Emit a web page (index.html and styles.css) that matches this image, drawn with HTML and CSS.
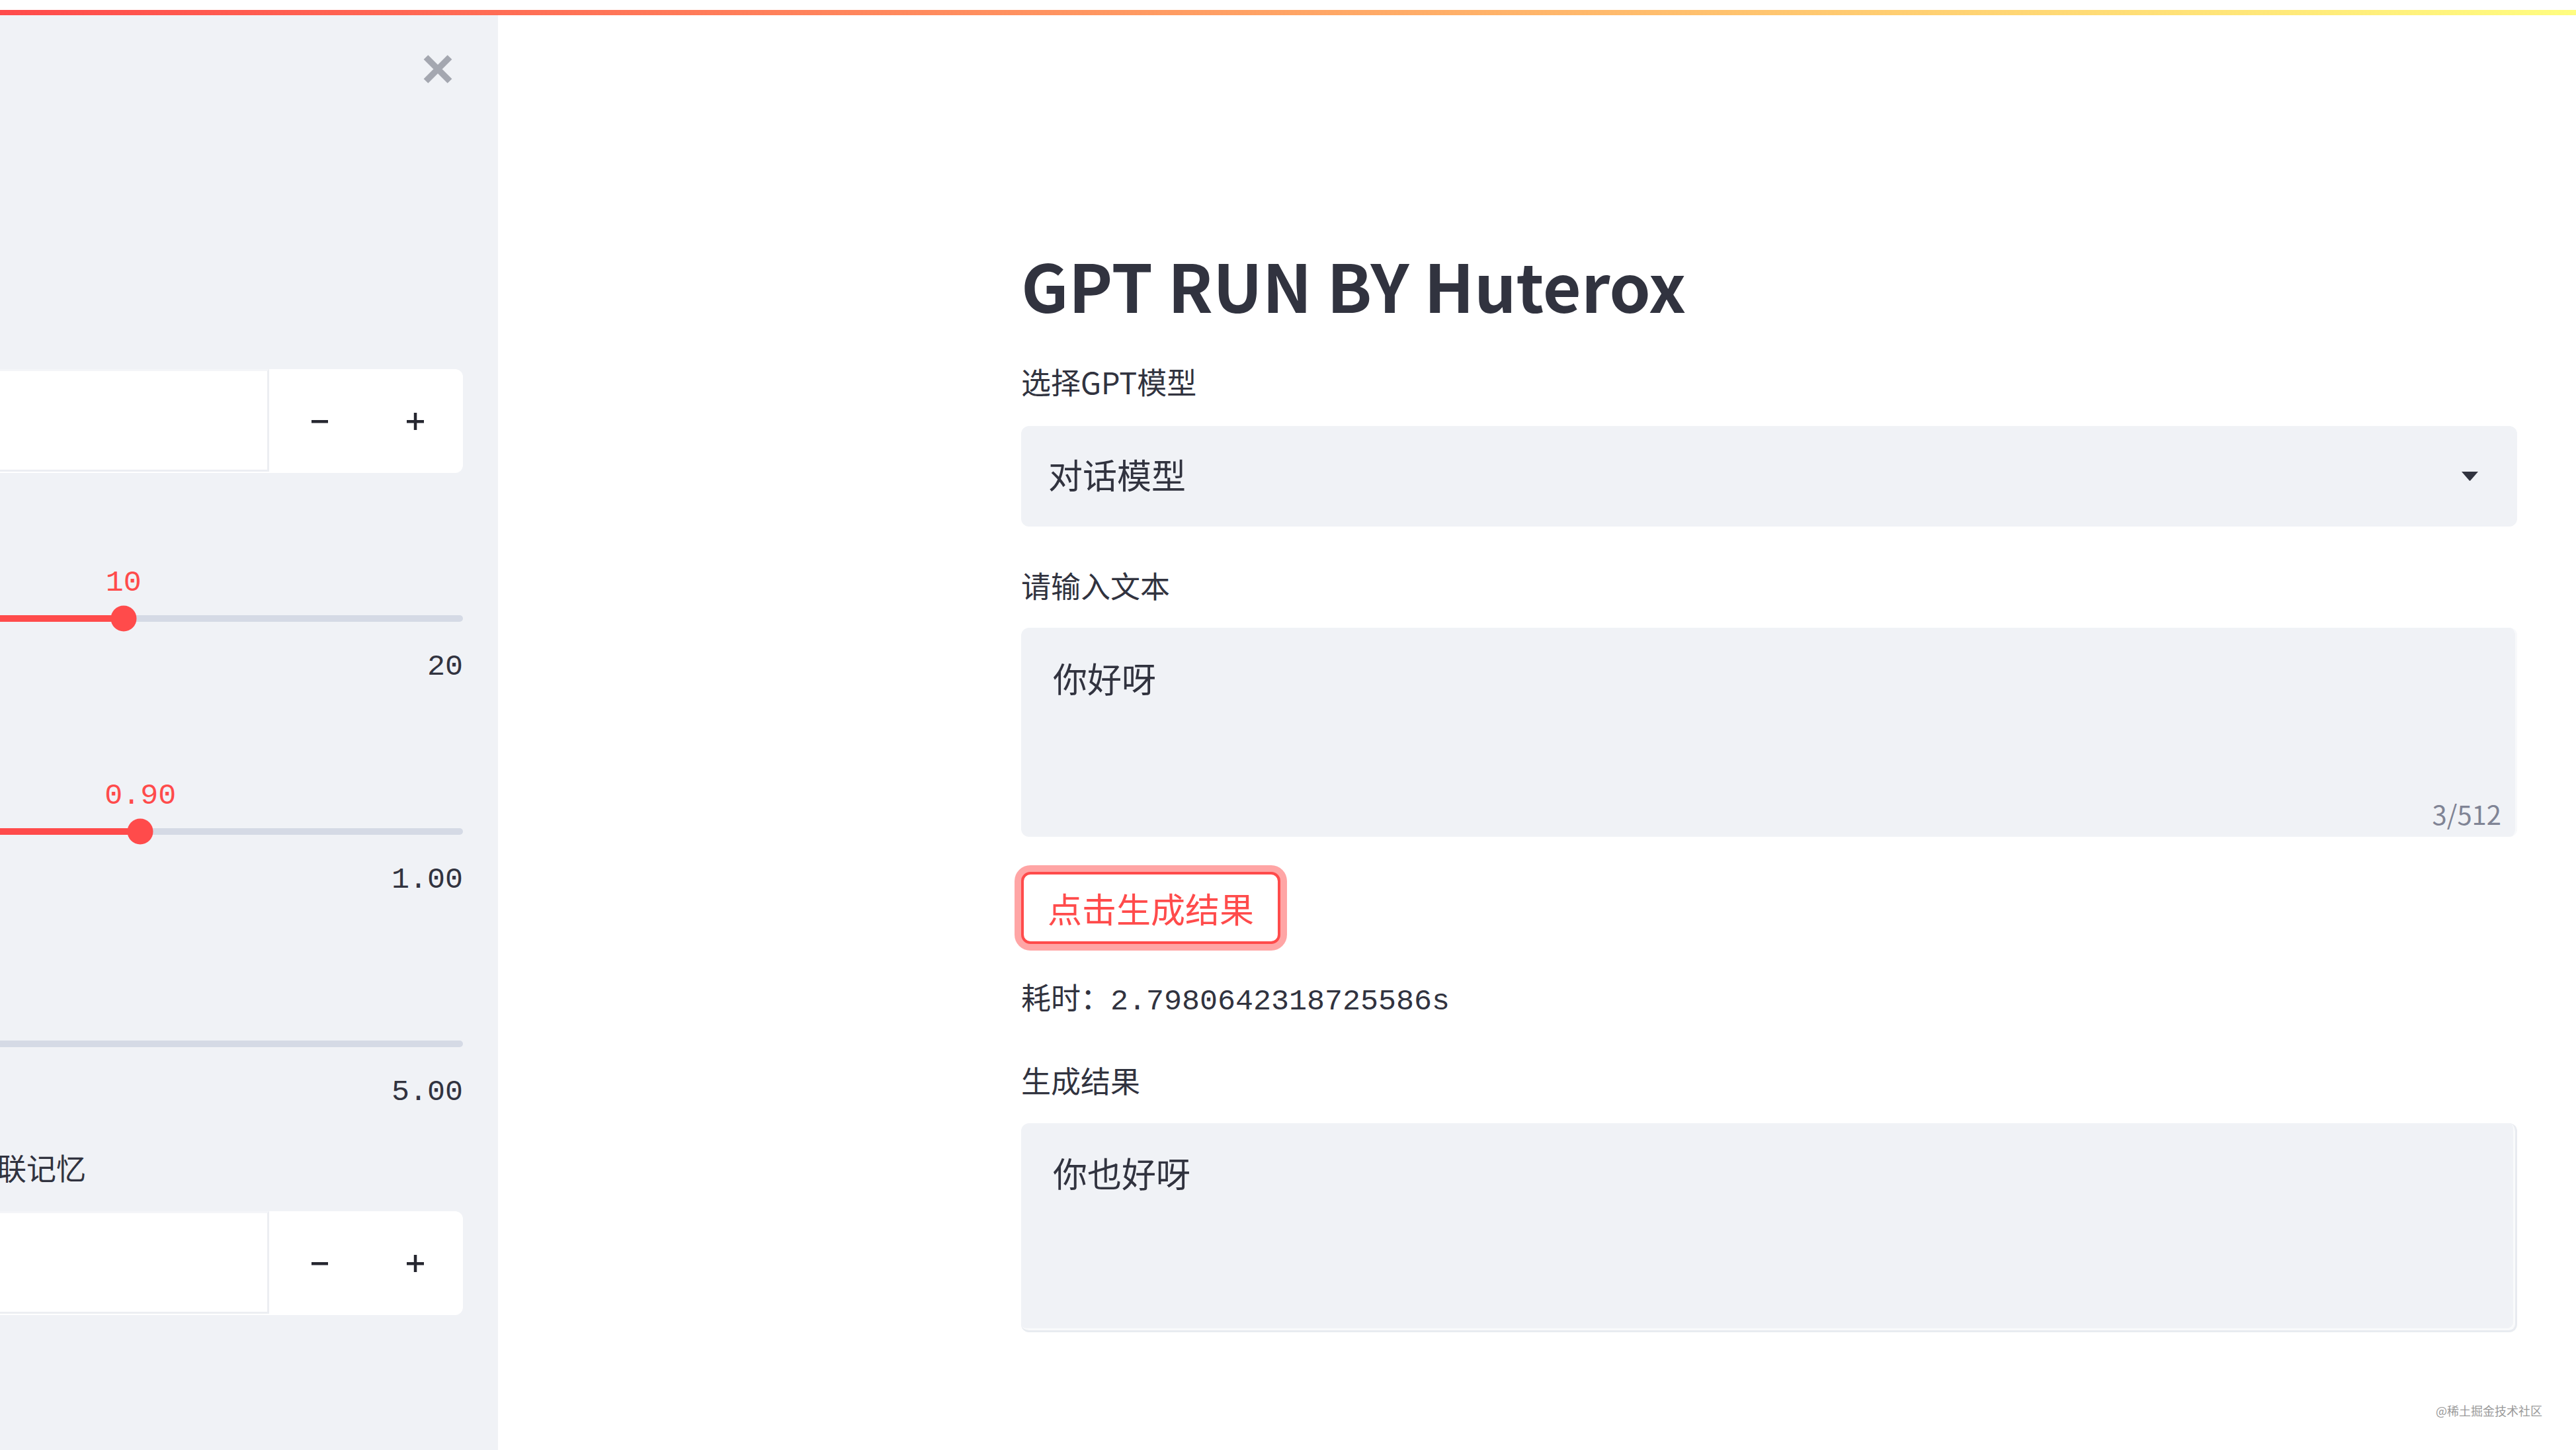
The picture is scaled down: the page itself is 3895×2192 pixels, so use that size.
FILE: index.html
```html
<!DOCTYPE html>
<html lang="zh-CN">
<head>
    <meta charset="UTF-8">
    <meta name="viewport" content="width=device-width, initial-scale=1.0">
    <title>GPT RUN BY Huterox</title>
    <link rel="stylesheet" href="styles.css">
</head>
<body>

    <div class="top-gap"></div>
    <div class="decoration"></div>

    <div class="app">
        <aside class="sidebar">
            <div class="sb-content">
                <div class="sb-close">
                    <svg viewBox="0 0 44 45" width="44" height="45">
                        <path d="M4 4.5L40 40.5M40 4.5L4 40.5" stroke="#a4a7b0" stroke-width="9.5" fill="none"/>
                    </svg>
                </div>

                <div class="num-input num-top">
                    <div class="num-field"></div>
                    <div class="num-btns">
                        <div class="step">
                            <svg viewBox="0 0 26 26" width="26" height="26"><path d="M0 11h25v4.5H0z" fill="#262730"/></svg>
                        </div>
                        <div class="step">
                            <svg viewBox="0 0 26 26" width="26" height="26"><path d="M0 11h26v4.5H0zM10.8 0h4.5v26h-4.5z" fill="#262730"/></svg>
                        </div>
                    </div>
                </div>

                <div class="slider slider-1">
                    <div class="slider-value-row"><span class="slider-value" style="left: 42%">10</span></div>
                    <div class="slider-track">
                        <div class="slider-rail"><div class="slider-fill" style="width: 42%"></div></div>
                        <div class="slider-thumb" style="left: 42%"></div>
                    </div>
                    <div class="slider-max">20</div>
                </div>

                <div class="slider slider-2">
                    <div class="slider-value-row"><span class="slider-value" style="left: 44.9%">0.90</span></div>
                    <div class="slider-track">
                        <div class="slider-rail"><div class="slider-fill" style="width: 44.9%"></div></div>
                        <div class="slider-thumb" style="left: 44.9%"></div>
                    </div>
                    <div class="slider-max">1.00</div>
                </div>

                <div class="slider slider-3">
                    <div class="slider-value-row"></div>
                    <div class="slider-track">
                        <div class="slider-rail"><div class="slider-fill" style="width: 0%"></div></div>
                        <div class="slider-thumb" style="left: 0%"></div>
                    </div>
                    <div class="slider-max">5.00</div>
                </div>

                <div class="sb-label">上下文关联记忆</div>

                <div class="num-input num-bottom">
                    <div class="num-field"></div>
                    <div class="num-btns">
                        <div class="step">
                            <svg viewBox="0 0 26 26" width="26" height="26"><path d="M0 11h25v4.5H0z" fill="#262730"/></svg>
                        </div>
                        <div class="step">
                            <svg viewBox="0 0 26 26" width="26" height="26"><path d="M0 11h26v4.5H0zM10.8 0h4.5v26h-4.5z" fill="#262730"/></svg>
                        </div>
                    </div>
                </div>
            </div>
        </aside>

        <main class="main">
            <div class="block">
                <h1 class="title">GPT RUN BY Huterox</h1>

                <div class="label label-model">选择GPT模型</div>
                <div class="select">
                    <span class="select-value">对话模型</span>
                    <svg class="select-arrow" viewBox="0 0 25 15" width="25" height="15">
                        <path d="M0 1h25L13.5 14.2q-1 1-2 0z" fill="#31333f"/>
                    </svg>
                </div>

                <div class="label label-input">请输入文本</div>
                <div class="textbox textbox-input">
                    <div class="textbox-text">你好呀</div>
                    <span class="counter">3/512</span>
                </div>

                <button class="run-btn">点击生成结果</button>

                <div class="elapsed">耗时：2.7980642318725586s</div>

                <div class="label label-result">生成结果</div>
                <div class="textbox textbox-result">
                    <div class="textbox-text">你也好呀</div>
                </div>
            </div>
        </main>
    </div>

    <div class="watermark">@稀土掘金技术社区</div>

</body>
</html>
```

FILE: styles.css
```css
* {
    box-sizing: border-box;
}

html, body {
    margin: 0;
    height: 100%;
}

body {
    position: relative;
    display: flex;
    flex-direction: column;
    height: 2192px;
    overflow: hidden;
    background: #fff;
    color: #31333f;
    font-family: "Noto Sans CJK SC", "Noto Sans", sans-serif;
}

.top-gap {
    height: 15px;
    flex: none;
}

.decoration {
    height: 8px;
    flex: none;
    background: linear-gradient(90deg, #ff4b4b, #fffd80);
}

.app {
    flex: 1;
    display: flex;
    min-height: 0;
}

/* 侧边栏 (左侧被截掉一部分) */
.sidebar {
    width: 753px;
    flex: none;
    background: #f0f2f6;
    padding-right: 53px;
    overflow: hidden;
}

.sb-content {
    width: 885px;
    margin-left: -185px;
    padding-top: 59px;
}

.sb-close {
    display: flex;
    justify-content: flex-end;
    padding-right: 16px;
    height: 45px;
}

.num-input {
    display: flex;
    height: 157px;
    background: #fff;
    border-radius: 0 12px 12px 0;
}

.num-top {
    margin-top: 431px;
}

.num-bottom {
    margin-top: 30px;
}

.num-field {
    flex: 1;
    margin-right: 5px;
    border-top: 3px solid #f4f5f8;
    border-right: 3px solid #eceef2;
    border-bottom: 3px solid #eceef2;
    margin-bottom: 2px;
}

.num-btns {
    display: flex;
    width: 288px;
}

.step {
    flex: 1;
    display: flex;
    align-items: center;
    justify-content: center;
}

/* 滑块 */
.slider-1 {
    margin-top: 135px;
}

.slider-2 {
    margin-top: 132px;
}

.slider-3 {
    margin-top: 131px;
}

.slider-value-row {
    position: relative;
    height: 63px;
}

.slider-value,
.slider-max {
    font-family: "Liberation Mono", "DejaVu Sans Mono", monospace;
    font-size: 45px;
    line-height: 63px;
}

.slider-value {
    position: absolute;
    top: 0;
    transform: translateX(-50%);
    color: #ff4b4b;
}

.slider-track {
    position: relative;
    height: 40px;
    margin-top: 2px;
    padding-top: 15px;
}

.slider-rail {
    height: 10px;
    border-radius: 5px;
    background: #d5dae5;
    overflow: hidden;
}

.slider-fill {
    height: 100%;
    background: #ff4b4b;
}

.slider-thumb {
    position: absolute;
    top: 50%;
    width: 39px;
    height: 39px;
    border-radius: 50%;
    background: #ff4b4b;
    transform: translate(-50%, -50%);
}

.slider-max {
    margin-top: 22px;
    height: 63px;
    text-align: right;
    color: #31333f;
}

.sb-label {
    margin-top: 46px;
    font-size: 45px;
    line-height: 72px;
    white-space: nowrap;
}

/* 主区域 */
.main {
    flex: 1;
    display: flex;
    justify-content: flex-end;
    padding-right: 89px;
}

.block {
    width: 2262px;
    padding-top: 337px;
}

.title {
    margin: 0;
    font-size: 100px;
    line-height: 140px;
    font-weight: 700;
    color: #31333f;
}

.label {
    font-size: 45px;
    line-height: 72px;
}

.label-model {
    margin-top: 41px;
}

.select {
    display: flex;
    align-items: center;
    height: 152px;
    margin-top: 31px;
    padding-left: 41px;
    padding-bottom: 8px;
    background: #f0f2f6;
    border-radius: 12px;
    font-size: 52px;
}

.select-arrow {
    margin-left: auto;
    margin-right: 59px;
    margin-bottom: -6px;
}

.label-input {
    margin-top: 53px;
}

.textbox {
    position: relative;
    height: 316px;
    padding: 34px 48px 0;
    background: #f0f2f6;
    border-radius: 12px;
    font-size: 52px;
    line-height: 83px;
}

.textbox-input {
    margin-top: 28px;
    box-shadow: inset -7px 0 0 -4px #f8f9fb;
}

.counter {
    position: absolute;
    right: 24px;
    bottom: 5px;
    font-size: 40px;
    line-height: 60px;
    color: #808495;
}

.run-btn {
    display: flex;
    align-items: center;
    height: 109px;
    margin-top: 53px;
    padding: 0 36px;
    background: #fff;
    border: 4px solid #ff4b4b;
    border-radius: 14px;
    box-shadow: 0 0 0 10px rgba(255, 75, 75, 0.5);
    color: #ff4b4b;
    font-family: "Noto Sans CJK SC", sans-serif;
    font-size: 52px;
}

.elapsed {
    margin-top: 52px;
    font-family: "Liberation Mono", "Noto Sans CJK SC", monospace;
    font-size: 45px;
    line-height: 72px;
}

.label-result {
    margin-top: 46px;
}

.textbox-result {
    margin-top: 29px;
    padding-top: 33px;
    border-right: 3px solid #e8ebf0;
    border-bottom: 3px solid #e8ebf0;
    box-shadow: inset -3px -3px 0 0 #f9fafb;
}

.watermark {
    position: absolute;
    right: 51px;
    bottom: 50px;
    font-size: 18px;
    line-height: 20px;
    color: #9a9a9a;
    text-shadow: 0 0 1px #fff;
}
```
